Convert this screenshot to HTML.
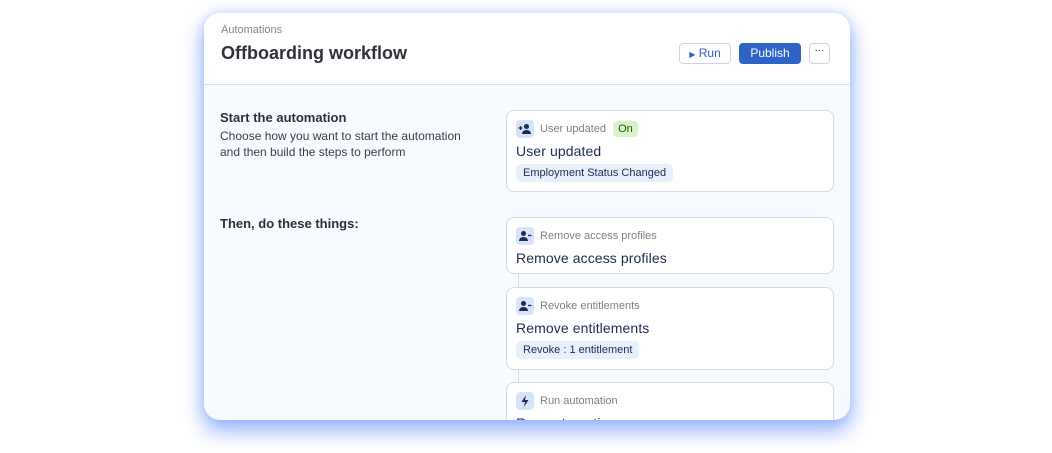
<!DOCTYPE html><html><head><style>
*{box-sizing:border-box;margin:0;padding:0}
body{width:1052px;height:453px;background:#fff;font-family:"Liberation Sans",sans-serif;position:relative;overflow:hidden}
.win{position:absolute;left:204px;top:13px;width:646px;height:407px;border-radius:16px;background:#f7faff;overflow:hidden;box-shadow:0 10px 20px 2px rgba(80,130,250,.55),0 0 10px rgba(120,160,250,.3)}
.hdr{position:absolute;left:0;top:0;width:646px;height:72px;background:#fff;border-bottom:1px solid #dde0e6}
.t{position:absolute;white-space:nowrap}
.btn{position:absolute;top:30px;height:21px;border-radius:4px;font-size:12px;line-height:19px;text-align:center}
.card{position:absolute;left:302px;width:328px;background:#fff;border:1px solid #d6d9df;border-radius:8px}
.ic{position:absolute;left:9px;top:9px;width:18px;height:18px;border-radius:4px;background:#d7e3fb}
.ic svg{display:block}
.small{position:absolute;left:33px;top:12px;font-size:11px;color:#7a7f8a;white-space:nowrap}
.big{position:absolute;left:9px;top:32px;font-size:14px;color:#1d2b50;white-space:nowrap;letter-spacing:.1px}
.tag{position:absolute;left:9px;top:53px;height:18px;padding:0 7px;background:#e8f0fd;border-radius:5px;font-size:11px;line-height:18px;color:#1d2b50;white-space:nowrap}
</style></head><body>
<div class="win">
<div class="hdr">
<div class="t" style="left:17px;top:11px;font-size:11px;color:#80848c">Automations</div>
<div class="t" style="left:17px;top:30px;font-size:18px;font-weight:bold;color:#2e323b">Offboarding workflow</div>
<div class="btn" style="left:475px;width:52px;border:1px solid #cfd4dc;color:#2d5fc8;background:#fff"><span style="font-size:8px">▶</span> Run</div>
<div class="btn" style="left:535px;width:62px;background:#2e63c8;color:#fff;line-height:21px">Publish</div>
<div class="btn" style="left:605px;width:21px;border:1px solid #cfd4dc;background:#fff;color:#333;line-height:14px;font-size:10px">···</div>
</div>
<div class="t" style="left:16px;top:97px;font-size:13px;font-weight:bold;color:#2a2f3a">Start the automation</div>
<div class="t" style="left:16px;top:115px;font-size:12px;color:#3a3f48;line-height:16px">Choose how you want to start the automation<br>and then build the steps to perform</div>
<div class="t" style="left:16px;top:203px;font-size:13px;font-weight:bold;color:#2a2f3a">Then, do these things:</div>
<div style="position:absolute;left:314px;top:260px;width:1px;height:150px;background:#d6d9df"></div>
<div class="card" style="top:97px;height:82px"><div class="ic"><svg width="18" height="18" viewBox="0 0 18 18" fill="#1d2b50"><circle cx="10.5" cy="6.5" r="2.5"/><path d="M6 14c0-2.5 2-4 4.5-4s4.5 1.5 4.5 4z"/><path d="M2.5 8h4M4.5 6v4" stroke="#1d2b50" stroke-width="1.3"/></svg></div><div class="small">User updated <span style="background:#d8f5c8;color:#2a4a1a;padding:2px 5px;border-radius:4px;margin-left:4px">On</span></div><div class="big">User updated</div><div class="tag">Employment Status Changed</div></div>
<div class="card" style="top:204px;height:57px"><div class="ic"><svg width="18" height="18" viewBox="0 0 18 18" fill="#1d2b50"><circle cx="7.5" cy="6.5" r="2.5"/><path d="M3 14c0-2.5 2-4 4.5-4s4.5 1.5 4.5 4z"/><path d="M12 8.5h3.5" stroke="#1d2b50" stroke-width="1.3"/></svg></div><div class="small">Remove access profiles</div><div class="big">Remove access profiles</div></div>
<div class="card" style="top:274px;height:83px"><div class="ic"><svg width="18" height="18" viewBox="0 0 18 18" fill="#1d2b50"><circle cx="7.5" cy="6.5" r="2.5"/><path d="M3 14c0-2.5 2-4 4.5-4s4.5 1.5 4.5 4z"/><path d="M12 8.5h3.5" stroke="#1d2b50" stroke-width="1.3"/></svg></div><div class="small">Revoke entitlements</div><div class="big">Remove entitlements</div><div class="tag">Revoke : 1 entitlement</div></div>
<div class="card" style="top:369px;height:80px"><div class="ic"><svg width="18" height="18" viewBox="0 0 18 18" fill="#1d2b50"><path d="M10 3L5.5 10H9l-1 5 4.5-7H9z"/></svg></div><div class="small">Run automation</div><div class="big">Run automation</div></div>
</div>
</body></html>
